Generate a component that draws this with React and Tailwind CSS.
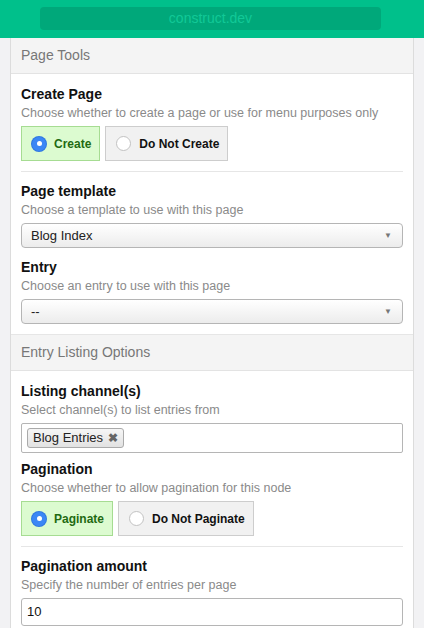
import React from 'react';

function Radio({ checked }) {
  return checked ? (
    <span className="w-[14px] h-[14px] rounded-full bg-[#3b87f5] flex items-center justify-center shadow-[0_0_0_1px_#2f78e0]">
      <span className="w-[5px] h-[5px] rounded-full bg-white" />
    </span>
  ) : (
    <span className="w-[15px] h-[15px] rounded-full bg-white border border-[#c2c2c2]" />
  );
}

function Choice({ label, checked }) {
  return (
    <div
      className={
        checked
          ? 'h-[35px] pl-[10px] pr-[8px] flex items-center gap-[8px] bg-[#dcfbd0] border border-[#a6dc92] text-[#1f6a12] font-bold text-[12px]'
          : 'h-[35px] pl-[10px] pr-[8px] flex items-center gap-[8px] bg-[#f1f1f1] border border-[#cdcdcd] text-[#111] font-bold text-[12px]'
      }
    >
      <Radio checked={checked} />
      <span>{label}</span>
    </div>
  );
}

function Field({ title, desc, children }) {
  return (
    <div>
      <div className="text-[14px] font-bold text-[#111] leading-[18px]">{title}</div>
      <div className="text-[12.5px] text-[#8a8a8a] leading-[16px] mt-[2px]">{desc}</div>
      <div className="mt-[5px]">{children}</div>
    </div>
  );
}

function Select({ value }) {
  return (
    <div className="h-[25px] rounded-[4px] border border-[#b5b5b5] bg-gradient-to-b from-white to-[#ececec] flex items-center justify-between pl-[9px] pr-[10px] text-[13px] text-[#222]">
      <span>{value}</span>
      <span className="text-[8px] text-[#777]">▼</span>
    </div>
  );
}

function Section({ title }) {
  return (
    <div className="h-[36px] bg-[#f4f4f4] border-b border-[#e3e3e3] flex items-center px-[10px] text-[14px] text-[#777]">
      {title}
    </div>
  );
}

export default function App() {
  return (
    <div className="w-[424px] h-[628px] overflow-hidden bg-[#f2f2f4] font-['Liberation_Sans',Arial,sans-serif]">
      {/* top address bar */}
      <div className="h-[38px] bg-[#00c08b] pt-[7px] pl-[40px] pr-[43px]">
        <div className="h-[23px] rounded-[4px] bg-[#00a87a] flex items-center justify-center text-[14px] text-[#12c897]">
          construct.dev
        </div>
      </div>

      <div className="mx-[10px] bg-white border-x border-[#dcdcdc] h-full">
        <Section title="Page Tools" />
        <div className="px-[10px] pt-[11px] pb-[10px]">
          <Field title="Create Page" desc="Choose whether to create a page or use for menu purposes only">
            <div className="flex gap-[5px]">
              <Choice label="Create" checked />
              <Choice label="Do Not Create" />
            </div>
          </Field>
          <div className="h-px bg-[#e6e6e6] mt-[10px] mb-[10px]" />
          <Field title="Page template" desc="Choose a template to use with this page">
            <Select value="Blog Index" />
          </Field>
          <div className="mt-[10px]">
            <Field title="Entry" desc="Choose an entry to use with this page">
              <Select value="--" />
            </Field>
          </div>
        </div>
        <div className="border-t border-[#e6e6e6]">
          <Section title="Entry Listing Options" />
        </div>
        <div className="px-[10px] pt-[11px]">
          <Field title="Listing channel(s)" desc="Select channel(s) to list entries from">
            <div className="h-[30px] border border-[#b5b5b5] rounded-[2px] flex items-center px-[5px]">
              <span className="h-[20px] px-[5px] rounded-[3px] border border-[#aaa] bg-gradient-to-b from-[#f6f6f6] to-[#e2e2e2] flex items-center gap-[5px] text-[13px] text-[#222]">
                Blog Entries <span className="text-[12px] text-[#666] font-bold">✖</span>
              </span>
            </div>
          </Field>
          <div className="mt-[7px]">
            <Field title="Pagination" desc="Choose whether to allow pagination for this node">
              <div className="flex gap-[5px]">
                <Choice label="Paginate" checked />
                <Choice label="Do Not Paginate" />
              </div>
            </Field>
          </div>
          <div className="h-px bg-[#e6e6e6] mt-[10px] mb-[10px]" />
          <Field title="Pagination amount" desc="Specify the number of entries per page">
            <div className="h-[28px] border border-[#b5b5b5] rounded-[3px] flex items-center px-[5px] text-[13px] text-[#111]">
              10
            </div>
          </Field>
        </div>
      </div>
    </div>
  );
}
